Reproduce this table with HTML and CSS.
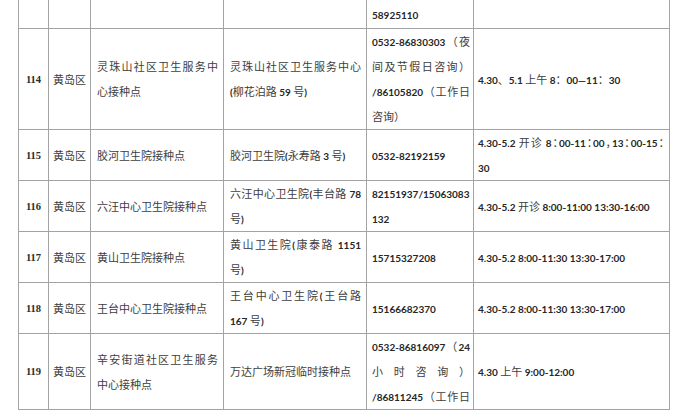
FILE: index.html
```html
<!DOCTYPE html>
<html lang="zh-CN">
<head>
<meta charset="utf-8">
<title>接种点列表</title>
<link rel="stylesheet" href="styles.css">
</head>
<body>
<table class="sheet">
  <colgroup>
    <col class="w-no"><col class="w-dist"><col class="w-name"><col class="w-addr"><col class="w-tel"><col class="w-time">
  </colgroup>
  <tbody>
    <tr class="lead">
      <td></td><td></td><td></td><td></td>
      <td class="tel"><span class="n">58925110</span></td>
      <td></td>
    </tr>
    <tr>
      <td class="no">114</td>
      <td class="dist">黄岛区</td>
      <td class="txt"><span class="ln">灵珠山社区卫生服务中</span>心接种点</td>
      <td class="txt"><span class="ln">灵珠山社区卫生服务中心</span><span class="n">(</span>柳花泊路 <span class="n">59</span> 号<span class="n">)</span></td>
      <td class="tel"><span class="ln"><span class="n">0532-86830303</span>（夜</span><span class="ln">间及节假日咨询）</span><span class="ln"><span class="n">/86105820</span>（工作日</span>咨询）</td>
      <td class="time"><span class="n">4.30</span>、<span class="n">5.1</span> 上午 <span class="n">8</span>：<span class="n">00—11</span>：<span class="n">30</span></td>
    </tr>
    <tr>
      <td class="no">115</td>
      <td class="dist">黄岛区</td>
      <td class="txt">胶河卫生院接种点</td>
      <td class="txt">胶河卫生院<span class="n">(</span>永寿路 <span class="n">3</span> 号<span class="n">)</span></td>
      <td class="tel"><span class="n">0532-82192159</span></td>
      <td class="time"><span class="ln half"><span class="n">4.30-5.2</span> 开诊 <span class="n">8</span>：<span class="n">00-11</span>：<span class="n">00</span>，<span class="n">13</span>：<span class="n">00-15</span>：</span><span class="n">30</span></td>
    </tr>
    <tr>
      <td class="no">116</td>
      <td class="dist">黄岛区</td>
      <td class="txt">六汪中心卫生院接种点</td>
      <td class="txt"><span class="ln">六汪中心卫生院<span class="n">(</span>丰台路 <span class="n">78</span></span>号<span class="n">)</span></td>
      <td class="tel"><span class="ln"><span class="n">82151937/15063083</span></span><span class="n">132</span></td>
      <td class="time"><span class="n">4.30-5.2</span> 开诊 <span class="n">8:00-11:00 13:30-16:00</span></td>
    </tr>
    <tr>
      <td class="no">117</td>
      <td class="dist">黄岛区</td>
      <td class="txt">黄山卫生院接种点</td>
      <td class="txt"><span class="ln">黄山卫生院<span class="n">(</span>康泰路 <span class="n">1151</span></span>号<span class="n">)</span></td>
      <td class="tel"><span class="n">15715327208</span></td>
      <td class="time"><span class="n">4.30-5.2 8:00-11:30 13:30-17:00</span></td>
    </tr>
    <tr>
      <td class="no">118</td>
      <td class="dist">黄岛区</td>
      <td class="txt">王台中心卫生院接种点</td>
      <td class="txt"><span class="ln">王台中心卫生院<span class="n">(</span>王台路</span><span class="n">167</span> 号<span class="n">)</span></td>
      <td class="tel"><span class="n">15166682370</span></td>
      <td class="time"><span class="n">4.30-5.2 8:00-11:30 13:30-17:00</span></td>
    </tr>
    <tr>
      <td class="no">119</td>
      <td class="dist">黄岛区</td>
      <td class="txt"><span class="ln">辛安街道社区卫生服务</span>中心接种点</td>
      <td class="txt">万达广场新冠临时接种点</td>
      <td class="tel"><span class="ln"><span class="n">0532-86816097</span>（<span class="n">24</span></span><span class="ln">小时咨询）</span><span class="ln"><span class="n">/86811245</span>（工作日</span></td>
      <td class="time"><span class="n">4.30</span> 上午 <span class="n">9:00-12:00</span></td>
    </tr>
  </tbody>
</table>
</body>
</html>
```
FILE: styles.css
```css
html, body {
  margin: 0;
  background: #ffffff;
}

.sheet {
  border-collapse: collapse;
  table-layout: fixed;
  width: 652px;
  margin-left: 18px;
  font-family: "Noto Sans CJK SC", "Noto Sans", sans-serif;
  font-size: 11px;
  line-height: 25px;
  color: #3d3d3d;
}

.w-no { width: 30px; }
.w-dist { width: 42px; }
.w-name { width: 133px; }
.w-addr { width: 143px; }
.w-tel { width: 107px; }
.w-time { width: 196px; }

.sheet td {
  border: 1px solid #a3a3a3;
  padding: 0 5px 0 6px;
  vertical-align: middle;
  text-align: left;
  white-space: normal;
}

.sheet .lead td {
  border-top: none;
  height: 28px;
}

.sheet td.no {
  padding: 0;
  text-align: center;
  font-family: "Liberation Serif", serif;
  font-weight: 700;
  font-size: 10.5px;
  color: #2a2a2a;
}

.sheet td.dist {
  padding: 0;
  text-align: center;
}

.sheet td.tel {
  padding: 0 3px 0 5px;
}

.sheet td.time {
  padding: 0 5px 0 4px;
}

.ln {
  display: block;
  text-align: justify;
  text-align-last: justify;
}

.half {
  font-feature-settings: "halt";
}

.n {
  font-family: "Lato", "Liberation Sans", sans-serif;
  font-weight: 700;
  font-size: 10px;
  line-height: 1;
  color: #262626;
}
```
